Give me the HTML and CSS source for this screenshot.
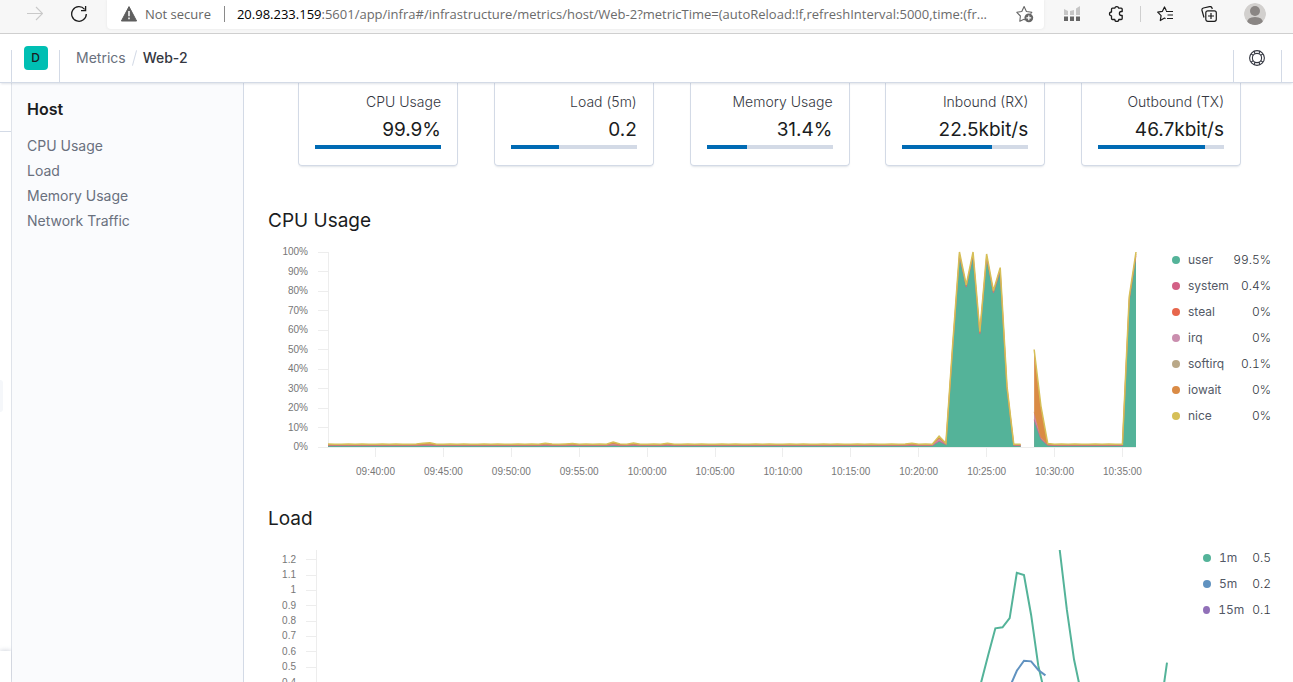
FILE: index.html
```html
<!DOCTYPE html>
<html lang="en">
<head>
<meta charset="utf-8">
<title>Web-2 - Metrics</title>
<link rel="stylesheet" href="styles.css">
</head>
<body>
<div class="toolbar">
  <button class="icon-btn" aria-label="Forward" disabled>
    <svg width="16" height="16" viewBox="0 0 16 16" fill="none" stroke="#c9c9c9" stroke-width="1.1"><path d="M0 7.5h15.5M9 1l6.5 6.5L9 14"/></svg>
  </button>
  <button class="icon-btn reload" aria-label="Reload">
    <svg width="16" height="16" viewBox="0 0 16 16" fill="none" stroke="#1b1b1b" stroke-width="1.3"><path d="M15.3 8A7.3 7.3 0 1 1 13.6 3.3M14.6 0v4.6H10"/></svg>
  </button>
  <div class="omnibox">
    <svg width="16" height="16" viewBox="0 0 16 16"><path d="M8 .6 15.6 15H.4z" fill="#5f5f5f" stroke="#5f5f5f" stroke-linejoin="round"/><path d="M8 5v5.2M8 11.6v1.6" stroke="#fff" stroke-width="1.5"/></svg>
    <span class="not-secure">Not secure</span>
    <span class="omni-sep"></span>
    <label class="host" for="url">20.98.233.159</label>
    <input class="url" id="url" type="text" value=":5601/app/infra#/infrastructure/metrics/host/Web-2?metricTime=(autoReload:!f,refreshInterval:5000,time:(fr...">
    <button class="icon-btn" aria-label="Add to favorites">
      <svg width="18" height="18" viewBox="0 0 18 18" fill="none" stroke="#666" stroke-width="1.1" stroke-linejoin="round"><path d="M8.8 15 8 14.2 3.8 16.2 4.4 11 .8 7.3 5.8 6.5 8.1 1.600 10.400 6.500 15.800 7.300 14.600 8.600"/><circle cx="12.800" cy="12.800" r="4.400" fill="#666" stroke="none"/><path d="M10.400 12.800h4.800M12.800 10.400v4.800" stroke="#fff" stroke-width="1.2"/></svg>
    </button>
  </div>
  <div class="tools">
    <button class="icon-btn" aria-label="Analytics extension">
      <svg width="16" height="16" viewBox="0 0 16 16"><path d="M0 3l4 2v4H0zM6 5l4-1v5H6zM12 2.500l4-2.500v9h-4z" fill="#c6c6c6"/><path d="M0 10.500h4V15H0zM6 10.500h4V15H6zM12 10.500h4V15h-4z" fill="#666"/></svg>
    </button>
    <button class="icon-btn" aria-label="Extensions">
      <svg width="16" height="16" viewBox="0 0 16 16" fill="none" stroke="#1b1b1b" stroke-width="1.300" stroke-linejoin="round"><path d="M4.500 2.200H6.800A2 2 0 0 1 10.700 2.200H13.200Q14.200 2.200 14.200 3.200V5.500H13.400A2 2 0 0 0 13.400 9.500H14.200V12.500Q14.200 13.500 13.200 13.500H10.800A2 2 0 0 1 6.800 13.500H4.500Q3.500 13.500 3.500 12.500V10A2 2 0 0 1 3.500 6V3.200Q3.500 2.200 4.500 2.200Z"/></svg>
    </button>
  </div>
  <span class="tool-sep"></span>
  <div class="tools">
    <button class="icon-btn" aria-label="Favorites">
      <svg width="16" height="16" viewBox="0 0 16 16" fill="none" stroke="#1b1b1b" stroke-width="1.200" stroke-linejoin="round"><path d="M8.500 12.700 7.500 12.100 3.300 14.500 4.100 9.600.7 6.200 5.300 5.400 7.500 1 9.400 4.800M9 5.500h7M10.500 9H16M10 12.500h6"/></svg>
    </button>
    <button class="icon-btn" aria-label="Collections">
      <svg width="16" height="16" viewBox="0 0 16 16" fill="none" stroke="#1b1b1b" stroke-width="1.200" stroke-linejoin="round"><rect x="4.800" y="4.800" width="10.500" height="10.500" rx="2"/><path d="M10 7v6M7 10h6M3 11.500 1 4.500Q.5 2.600 2.400 2L8.500.6Q10.400.2 11 2L11.300 3"/></svg>
    </button>
  </div>
  <button class="icon-btn profile" aria-label="Profile">
    <svg width="22" height="22" viewBox="0 0 22 22"><defs><clipPath id="face"><circle cx="11" cy="11" r="11"/></clipPath></defs><g clip-path="url(#face)"><circle cx="11" cy="11" r="11" fill="#d2d0ce"/><circle cx="11" cy="8" r="5" fill="#8a8684"/><path d="M3 20q0-6 8-6t8 6L11 23z" fill="#8a8684"/></g></svg>
  </button>
</div>

<header class="header">
  <span class="divider"></span>
  <button class="space" aria-label="Default space"><span class="space-mark">D</span></button>
  <span class="divider"></span>
  <nav class="crumbs" aria-label="Breadcrumb">
    <a class="crumb" href="#metrics">Metrics</a>
    <span class="slash"></span>
    <span class="crumb current">Web-2</span>
  </nav>
  <span class="divider"></span>
  <button class="help" aria-label="Help">
    <svg width="16" height="16" viewBox="0 0 16 16" fill="none" stroke="#343741" stroke-width="1.100"><circle cx="8" cy="8" r="7.400"/><circle cx="8" cy="8" r="4.600"/><path d="M5.200 1.200 6 3.800M2 3.700 4.200 5.400M10.800 1.200 10 3.800M14 3.700 11.800 5.400M5.200 14.800 6 12.200M2 12.300 4.200 10.600M10.800 14.800 10 12.200M14 12.300 11.800 10.600"/></svg>
  </button>
  <span class="divider"></span>
</header>

<div class="body">
  <div class="rail">
    <div class="rail-top"></div>
    <div class="rail-mid"><span class="rail-item"></span></div>
    <div class="rail-bottom"></div>
  </div>
  <aside class="sidebar">
    <h1 class="side-title">Host</h1>
    <nav class="side-nav">
      <a href="#cpu">CPU Usage</a>
      <a href="#load">Load</a>
      <a href="#memory">Memory Usage</a>
      <a href="#network">Network Traffic</a>
    </nav>
  </aside>
  <main class="main">
    <div class="cards">
      <div class="card"><span class="card-name">CPU Usage</span><span class="card-value">99.9%</span><div class="bar"><div class="fill" style="width:100%"></div></div></div>
      <div class="card"><span class="card-name">Load (5m)</span><span class="card-value">0.2</span><div class="bar"><div class="fill" style="width:38%"></div></div></div>
      <div class="card"><span class="card-name">Memory Usage</span><span class="card-value">31.4%</span><div class="bar"><div class="fill" style="width:32%"></div></div></div>
      <div class="card"><span class="card-name">Inbound (RX)</span><span class="card-value">22.5kbit/s</span><div class="bar"><div class="fill" style="width:71%"></div></div></div>
      <div class="card"><span class="card-name">Outbound (TX)</span><span class="card-value">46.7kbit/s</span><div class="bar"><div class="fill" style="width:85%"></div></div></div>
    </div>
    <section class="metric" id="cpu">
      <h2 class="metric-title">CPU Usage</h2>
      <div class="metric-row">
        <svg class="chart" id="cpu-chart" role="img" aria-label="CPU usage over time"></svg>
        <ul class="legend">
          <li><i class="dot user"></i><span>user</span><b>99.5%</b></li>
          <li><i class="dot system"></i><span>system</span><b>0.4%</b></li>
          <li><i class="dot steal"></i><span>steal</span><b>0%</b></li>
          <li><i class="dot irq"></i><span>irq</span><b>0%</b></li>
          <li><i class="dot softirq"></i><span>softirq</span><b>0.1%</b></li>
          <li><i class="dot iowait"></i><span>iowait</span><b>0%</b></li>
          <li><i class="dot nice"></i><span>nice</span><b>0%</b></li>
        </ul>
      </div>
    </section>
    <section class="metric" id="load">
      <h2 class="metric-title">Load</h2>
      <div class="metric-row">
        <svg class="chart" id="load-chart" role="img" aria-label="Load over time"></svg>
        <ul class="legend narrow">
          <li><i class="dot user"></i><span>1m</span><b>0.5</b></li>
          <li><i class="dot five"></i><span>5m</span><b>0.2</b></li>
          <li><i class="dot fifteen"></i><span>15m</span><b>0.1</b></li>
        </ul>
      </div>
    </section>
  </main>
</div>
<script src="charts.js"></script>
</body>
</html>
```

FILE: styles.css
```css
* { box-sizing: border-box; }
body {
  margin: 0;
  height: 100vh;
  display: flex;
  flex-direction: column;
  overflow: hidden;
  background: #fff;
  color: #343741;
  font: 14px/24px Inter, sans-serif;
}
button { border: 0; padding: 0; background: none; font: inherit; color: inherit; }
a { color: inherit; text-decoration: none; }
svg { display: block; }

/* Browser toolbar */
.toolbar {
  flex: none;
  height: 34px;
  display: flex;
  align-items: center;
  padding: 0 27px 5px;
  background: #f7f7f7;
  border-bottom: 1px solid #cfcfcf;
  font-family: "Open Sans", sans-serif;
  font-size: 13px;
}
.icon-btn { flex: none; }
.reload { margin: 0 20px 0 28px; }
.omnibox {
  flex: 1;
  min-width: 0;
  height: 29px;
  display: flex;
  align-items: center;
  padding: 0 10px 0 14px;
  background: #fff;
  border-radius: 0 0 4px 4px;
  box-shadow: 0 0 3px #e4e4e4;
}
.not-secure { margin-left: 8px; color: #666; white-space: nowrap; }
.omni-sep { width: 1px; height: 16px; margin: 0 12px 0 13px; background: #8a8a8a; }
.host { color: #000; }
.url {
  flex: 1;
  min-width: 0;
  border: 0;
  padding: 0;
  background: none;
  font: inherit;
  color: #6b6b6b;
}
.tools { display: flex; gap: 28px; }
.omnibox + .tools { margin-left: 20px; }
.tool-sep { width: 1px; height: 16px; margin: 0 16px; background: #cfcfcf; }
.profile { margin-left: 27px; }

/* App header */
.header {
  position: relative;
  z-index: 1;
  flex: none;
  height: 49px;
  display: flex;
  align-items: center;
  padding: 0 11px;
  background: #fff;
  border-bottom: 1px solid #d3dae6;
  box-shadow: 0 2px 2px -1px rgba(152, 162, 179, 0.3);
}
.divider { align-self: flex-end; width: 1px; height: 32px; background: #d3dae6; }
.space, .help { width: 47px; display: flex; justify-content: center; }
.help { padding-right: 1px; }
.space-mark {
  width: 24px;
  height: 24px;
  border-radius: 4px;
  background: #00bfb3;
  color: #1a1c21;
  font-size: 12px;
  font-weight: 500;
}
.crumbs { flex: 1; display: flex; align-items: center; padding-left: 16px; }
.crumb { color: #69707d; }
.current { color: #343741; font-weight: 500; }
.slash { width: 1px; height: 16px; margin: 0 8px; background: #d3dae6; transform: rotate(15deg); }

/* Page body */
.body { flex: 1; min-height: 0; display: flex; }
.rail {
  flex: none;
  width: 12px;
  display: flex;
  flex-direction: column;
  border-right: 1px solid #dfe3ea;
}
.rail-top { height: 49px; border-bottom: 1px solid #d3dae6; }
.rail-mid { flex: 1; display: flex; align-items: center; padding-top: 8px; }
.rail-item { width: 3px; height: 32px; border-radius: 0 4px 4px 0; background: #f5f7fa; }
.rail-bottom { height: 31px; box-shadow: 0 -1px 4px rgba(152, 162, 179, 0.4); }
.sidebar {
  flex: none;
  width: 232px;
  padding: 14px 15px;
  background: #fafbfd;
  border-right: 1px solid #d3dae6;
}
.side-title { margin: 0 0 12px; font-size: 16px; line-height: 24px; font-weight: 600; color: #1a1c21; }
.side-nav { display: flex; flex-direction: column; color: #69707d; line-height: 25px; }

.main { flex: 1; min-width: 0; overflow: hidden; padding: 0 22px 0 24px; }
.cards { display: flex; justify-content: space-between; padding: 0 30px; margin-bottom: 43px; }
.card {
  width: 160px;
  display: flex;
  flex-direction: column;
  padding: 7px 16px 16px;
  border: 1px solid #d3dae6;
  border-top: 0;
  border-radius: 0 0 4px 4px;
  box-shadow: 0 2px 2px -1px rgba(152, 162, 179, 0.3);
  text-align: right;
}
.card-name { line-height: 24px; font-weight: 300; color: #343741; }
.card-value { font-size: 19px; line-height: 31px; color: #1a1c21; }
.bar { height: 4px; background: #d3dae6; }
.fill { height: 4px; background: #006bb4; }

.metric { margin-bottom: 23px; }
.metric-title { margin: 0 0 11px; font-size: 19px; line-height: 24px; font-weight: 400; color: #1a1c21; }
.metric-row { display: flex; gap: 24px; }
.chart { flex: 1; min-width: 0; height: 240px; font: 10px "Liberation Sans", sans-serif; }
.chart text { fill: #777; }
.axis { fill: none; stroke: #ededed; stroke-width: 1; shape-rendering: crispEdges; }
.legend {
  width: 99px;
  margin: 0;
  padding: 3px 0 0;
  list-style: none;
  font-size: 12px;
  line-height: 26px;
  font-variant-numeric: tabular-nums;
  color: #535966;
}
.narrow { width: 68px; }
.legend li { display: flex; align-items: center; gap: 8px; }
.legend b { margin-left: auto; font-weight: 300; color: #343741; }
.dot { width: 8px; height: 8px; border-radius: 50%; }
.user { background: #54b399; }
.system { background: #d36086; }
.steal { background: #e7664c; }
.irq { background: #ca8eae; }
.softirq { background: #b9a888; }
.iowait { background: #da8b45; }
.nice { background: #d6bf57; }
.five { background: #6092c0; }
.fifteen { background: #9170b8; }
```

FILE: charts.js
```js
const NS = 'http://www.w3.org/2000/svg';
const SAMPLES = 120;
const TOP = 8;

function add(svg, tag, attrs, text) {
  const el = document.createElementNS(NS, tag);
  for (const key in attrs) el.setAttribute(key, attrs[key]);
  if (text) el.textContent = text;
  svg.appendChild(el);
}

// Half-minute samples: [user, system, iowait], stacked percentages.
const cpu = [];
for (let i = 0; i < SAMPLES; i++) {
  cpu.push([0.7, 0.4, 0.3 + (i * 7 % 5 < 2 ? 0.2 : 0)]);
}
Object.assign(cpu, {
  14: [0.8, 0.5, 0.6], 15: [0.8, 0.6, 0.8], 32: [0.8, 0.6, 0.5], 36: [0.8, 0.5, 0.5],
  42: [0.9, 0.8, 0.9], 45: [0.8, 0.6, 0.6], 50: [0.8, 0.6, 0.5], 86: [0.8, 0.6, 0.5],
  90: [3, 1.4, 1.2], 91: [1.2, 0.4, 0.3], 92: [51, 1, 0.5], 93: [98, 1, 1], 94: [82, 0.6, 0.6],
  95: [98, 1, 1], 96: [58, 0.6, 0.6], 97: [97, 1, 1], 98: [79, 0.6, 0.6], 99: [90, 1, 1],
  100: [30, 0.8, 0.4], 103: null, 104: [14, 4, 32], 105: [4, 1, 16], 106: [0.9, 0.4, 0.5],
  118: [75, 1, 1], 119: [98, 1, 1]
});

const load = [
  { color: '#54b399', points: { 92: 0.15, 93: 0.4, 94: 0.58, 95: 0.753, 96: 0.76, 97: 0.82, 98: 1.114, 99: 1.1, 100: 0.84, 101: 0.51, 102: 0.31, 104: 1.263, 105: 0.873, 106: 0.55, 107: 0.33, 118: 0.2, 119: 0.53 } },
  { color: '#6092c0', points: { 96: 0.28, 97: 0.37, 98: 0.477, 99: 0.542, 100: 0.538, 101: 0.482, 102: 0.447 } }
];

function drawCpu() {
  const svg = document.getElementById('cpu-chart');
  svg.replaceChildren();
  const left = 60, height = 195;
  const step = (svg.clientWidth - left - 12) / (SAMPLES - 1);
  const x = i => left + i * step;
  const y = v => TOP + height - Math.min(v, 100) * height / 100;

  let axis = `M${left} ${TOP}V${TOP + height}H${x(119)}`;
  for (let v = 0; v <= 100; v += 10) {
    axis += `M${left - 10} ${Math.floor(y(v))}h10`;
    add(svg, 'text', { x: left - 20, y: y(v) + 3, 'text-anchor': 'end' }, v + '%');
  }
  for (let m = 0; m < 12; m++) {
    const cx = x(7 + m * 10);
    const minute = 40 + m * 5;
    const label = (minute < 60 ? '09:' : '10:') + String(minute % 60).padStart(2, '0') + ':00';
    axis += `M${Math.floor(cx)} ${TOP + height}v10`;
    add(svg, 'text', { x: cx, y: TOP + height + 28, 'text-anchor': 'middle' }, label);
  }
  add(svg, 'path', { d: axis, class: 'axis' });

  const layers = [[3, '#da8b45', '#d6bf57'], [2, '#ca8eae', '#da8b45'], [1, '#54b399', '#d36086']];
  for (const [start, end] of [[0, 102], [104, 119]]) {
    const lines = [];
    for (const [depth, fill, stroke] of layers) {
      let line = '';
      for (let i = start; i <= end; i++) {
        const total = cpu[i].slice(0, depth).reduce((a, b) => a + b, 0);
        line += `${line ? 'L' : 'M'}${x(i)} ${y(total)}`;
      }
      add(svg, 'path', { d: `${line}V${y(0)}H${x(start)}Z`, fill });
      lines.unshift({ d: line, stroke, fill: 'none', 'stroke-width': 1, 'stroke-opacity': 0.7 });
    }
    Object.assign(lines[2], { 'stroke-width': 1.5, 'stroke-opacity': 1 });
    lines.forEach(l => add(svg, 'path', l));
  }
}

function drawLoad() {
  const svg = document.getElementById('load-chart');
  svg.replaceChildren();
  const left = 48, height = 194, max = 1.263;
  const step = (svg.clientWidth - left - 12) / (SAMPLES - 1);
  const y = v => TOP + height - v * height / max;

  let axis = `M${left} ${TOP}V${TOP + height}H${left + step * 119}`;
  for (let t = 4; t <= 12; t++) {
    axis += `M${left - 10} ${Math.floor(y(t / 10))}h10`;
    add(svg, 'text', { x: left - 20, y: y(t / 10) + 3, 'text-anchor': 'end' }, String(t / 10));
  }
  add(svg, 'path', { d: axis, class: 'axis' });

  for (const { color, points } of load) {
    let d = '', previous = -9;
    for (const key of Object.keys(points)) {
      const i = Number(key);
      d += `${i === previous + 1 ? 'L' : 'M'}${left + i * step} ${y(points[key])}`;
      previous = i;
    }
    add(svg, 'path', { d, stroke: color, fill: 'none', 'stroke-width': 2 });
  }
}

function draw() { drawCpu(); drawLoad(); }
draw();
window.addEventListener('resize', draw);
```
